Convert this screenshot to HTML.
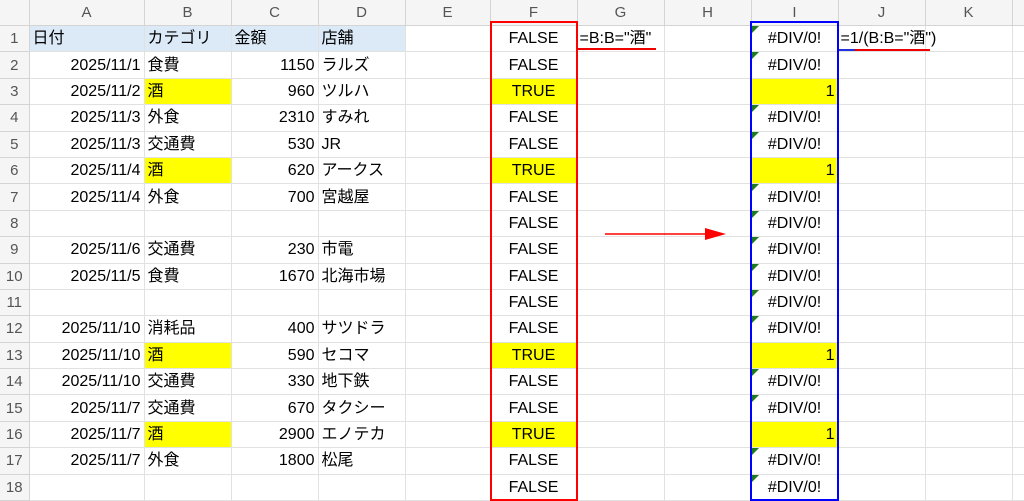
<!DOCTYPE html>
<html><head><meta charset="utf-8"><style>
*{margin:0;padding:0;box-sizing:border-box}
body{width:1024px;height:495px;overflow:hidden;background:#fff;font-family:"Liberation Sans","Noto Sans CJK JP",sans-serif;font-size:16px;color:#000;position:relative}
table{border-collapse:collapse;table-layout:fixed;position:absolute;left:0;top:0;width:1024px}
td{height:26.4px;border-right:1px solid #e1e1e1;border-bottom:1px solid #e1e1e1;padding:0 3px;white-space:nowrap;overflow:hidden;line-height:25px}
tr.h td{height:23px;background:#f5f5f5;color:#555;text-align:center;font-size:15px;border-color:#d4d4d4}
td.rn{background:#f5f5f5;color:#555;text-align:center;border-color:#d4d4d4;padding:0;font-size:15px}
.r{text-align:right}.c{text-align:center}
.y{background:#ffff00}
.b{background:#dce9f7}
.g{position:relative}
.g::before{content:"";position:absolute;left:0;top:0;border-top:7px solid #1f7a1f;border-right:7px solid transparent}
</style></head><body>
<table>
<colgroup><col style="width:29px"><col style="width:115px"><col style="width:87px"><col style="width:87px"><col style="width:87px"><col style="width:85px"><col style="width:87px"><col style="width:87px"><col style="width:87px"><col style="width:87px"><col style="width:87px"><col style="width:87px"><col style="width:12px"></colgroup>
<tr class="h"><td></td><td>A</td><td>B</td><td>C</td><td>D</td><td>E</td><td>F</td><td>G</td><td>H</td><td>I</td><td>J</td><td>K</td><td></td></tr>
<tr><td class="rn">1</td><td class="b">日付</td><td class="b">カテゴリ</td><td class="b">金額</td><td class="b">店舗</td><td></td><td class="c">FALSE</td><td style="overflow:visible;padding-left:2px">=B:B="酒"</td><td></td><td class="c g">#DIV/0!</td><td style="overflow:visible;padding-left:2px">=1/(B:B="酒")</td><td></td><td></td></tr>
<tr><td class="rn">2</td><td class="r">2025/11/1</td><td>食費</td><td class="r">1150</td><td>ラルズ</td><td></td><td class="c">FALSE</td><td></td><td></td><td class="c g">#DIV/0!</td><td></td><td></td><td></td></tr>
<tr><td class="rn">3</td><td class="r">2025/11/2</td><td class="y">酒</td><td class="r">960</td><td>ツルハ</td><td></td><td class="c y">TRUE</td><td></td><td></td><td class="r y">1</td><td></td><td></td><td></td></tr>
<tr><td class="rn">4</td><td class="r">2025/11/3</td><td>外食</td><td class="r">2310</td><td>すみれ</td><td></td><td class="c">FALSE</td><td></td><td></td><td class="c g">#DIV/0!</td><td></td><td></td><td></td></tr>
<tr><td class="rn">5</td><td class="r">2025/11/3</td><td>交通費</td><td class="r">530</td><td>JR</td><td></td><td class="c">FALSE</td><td></td><td></td><td class="c g">#DIV/0!</td><td></td><td></td><td></td></tr>
<tr><td class="rn">6</td><td class="r">2025/11/4</td><td class="y">酒</td><td class="r">620</td><td>アークス</td><td></td><td class="c y">TRUE</td><td></td><td></td><td class="r y">1</td><td></td><td></td><td></td></tr>
<tr><td class="rn">7</td><td class="r">2025/11/4</td><td>外食</td><td class="r">700</td><td>宮越屋</td><td></td><td class="c">FALSE</td><td></td><td></td><td class="c g">#DIV/0!</td><td></td><td></td><td></td></tr>
<tr><td class="rn">8</td><td></td><td></td><td></td><td></td><td></td><td class="c">FALSE</td><td></td><td></td><td class="c g">#DIV/0!</td><td></td><td></td><td></td></tr>
<tr><td class="rn">9</td><td class="r">2025/11/6</td><td>交通費</td><td class="r">230</td><td>市電</td><td></td><td class="c">FALSE</td><td></td><td></td><td class="c g">#DIV/0!</td><td></td><td></td><td></td></tr>
<tr><td class="rn">10</td><td class="r">2025/11/5</td><td>食費</td><td class="r">1670</td><td>北海市場</td><td></td><td class="c">FALSE</td><td></td><td></td><td class="c g">#DIV/0!</td><td></td><td></td><td></td></tr>
<tr><td class="rn">11</td><td></td><td></td><td></td><td></td><td></td><td class="c">FALSE</td><td></td><td></td><td class="c g">#DIV/0!</td><td></td><td></td><td></td></tr>
<tr><td class="rn">12</td><td class="r">2025/11/10</td><td>消耗品</td><td class="r">400</td><td>サツドラ</td><td></td><td class="c">FALSE</td><td></td><td></td><td class="c g">#DIV/0!</td><td></td><td></td><td></td></tr>
<tr><td class="rn">13</td><td class="r">2025/11/10</td><td class="y">酒</td><td class="r">590</td><td>セコマ</td><td></td><td class="c y">TRUE</td><td></td><td></td><td class="r y">1</td><td></td><td></td><td></td></tr>
<tr><td class="rn">14</td><td class="r">2025/11/10</td><td>交通費</td><td class="r">330</td><td>地下鉄</td><td></td><td class="c">FALSE</td><td></td><td></td><td class="c g">#DIV/0!</td><td></td><td></td><td></td></tr>
<tr><td class="rn">15</td><td class="r">2025/11/7</td><td>交通費</td><td class="r">670</td><td>タクシー</td><td></td><td class="c">FALSE</td><td></td><td></td><td class="c g">#DIV/0!</td><td></td><td></td><td></td></tr>
<tr><td class="rn">16</td><td class="r">2025/11/7</td><td class="y">酒</td><td class="r">2900</td><td>エノテカ</td><td></td><td class="c y">TRUE</td><td></td><td></td><td class="r y">1</td><td></td><td></td><td></td></tr>
<tr><td class="rn">17</td><td class="r">2025/11/7</td><td>外食</td><td class="r">1800</td><td>松尾</td><td></td><td class="c">FALSE</td><td></td><td></td><td class="c g">#DIV/0!</td><td></td><td></td><td></td></tr>
<tr><td class="rn">18</td><td></td><td></td><td></td><td></td><td></td><td class="c">FALSE</td><td></td><td></td><td class="c g">#DIV/0!</td><td></td><td></td><td></td></tr>
</table>
<div style="position:absolute;left:490px;top:21px;width:88px;height:480px;border:2px solid #ff0000"></div>
<div style="position:absolute;left:750px;top:21px;width:89px;height:480px;border:2px solid #0000ff"></div>
<div style="position:absolute;left:577px;top:48px;width:79px;height:2px;background:#e00"></div>
<div style="position:absolute;left:839px;top:49px;width:22px;height:2px;background:#2233dd"></div>
<div style="position:absolute;left:855px;top:49px;width:75px;height:2px;background:#e00"></div>
<svg style="position:absolute;left:600px;top:224px" width="130" height="20"><line x1="5" y1="10" x2="108" y2="10" stroke="#f00" stroke-width="1.5"/><polygon points="105,4 126,10 105,16" fill="#f00"/></svg>
</body></html>
